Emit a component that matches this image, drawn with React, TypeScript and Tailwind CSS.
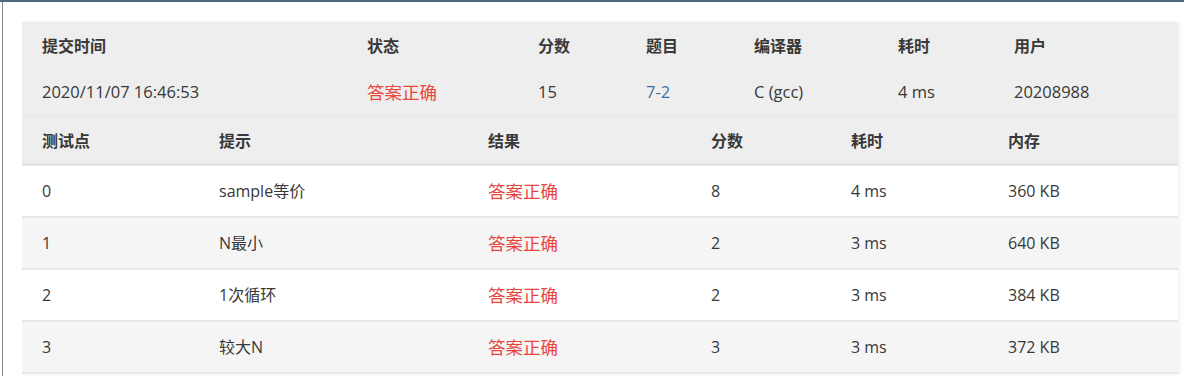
const font = { fontFamily: '"Open Sans", "Noto Sans CJK SC", sans-serif' };

const submitCols = "grid-cols-[325px_171px_108px_108px_144px_116px_184px]";
const caseCols = "grid-cols-[177px_269px_223px_140px_157px_190px]";

type CaseRow = { id: string; hint: string; score: string; time: string; mem: string };

const cases: CaseRow[] = [
  { id: "0", hint: "sample等价", score: "8", time: "4 ms", mem: "360 KB" },
  { id: "1", hint: "N最小", score: "2", time: "3 ms", mem: "640 KB" },
  { id: "2", hint: "1次循环", score: "2", time: "3 ms", mem: "384 KB" },
  { id: "3", hint: "较大N", score: "3", time: "3 ms", mem: "372 KB" },
];

function Status() {
  return <span className="text-[17.5px] text-[#e8453c]">答案正确</span>;
}

export default function App() {
  return (
    <div
      className="w-[1184px] h-[376px] overflow-hidden bg-white border-t-2 border-[#4a6983] text-[#383838]"
      style={font}
    >
      <div className="ml-[2px] h-full border-l border-[#8a8a8a] pl-[19px] pt-[20px] pr-[6px]">
        <div className="shadow-[2px_0_4px_rgba(0,0,0,0.06)]">
          {/* submission summary */}
          <div className={`grid ${submitCols} bg-[#eeeeee] h-[46px] items-center text-[16px] font-semibold`}>
            {["提交时间", "状态", "分数", "题目", "编译器", "耗时", "用户"].map((h) => (
              <div key={h} className="pl-5 pt-[1px]">
                {h}
              </div>
            ))}
          </div>
          <div className={`grid ${submitCols} bg-[#eeeeee] h-[48px] items-center text-[16.5px]`}>
            <div className="pl-5">2020/11/07 16:46:53</div>
            <div className="pl-5">
              <Status />
            </div>
            <div className="pl-5">15</div>
            <div className="pl-5 text-[#3b6ea5]">7-2</div>
            <div className="pl-5">C (gcc)</div>
            <div className="pl-5">4 ms</div>
            <div className="pl-5">20208988</div>
          </div>

          {/* test cases */}
          <div
            className={`grid ${caseCols} bg-[#eeeeee] h-[50px] items-center text-[16px] font-semibold border-t border-[#e6e6e6] border-b-[3px] border-b-[#e4e4e4]`}
          >
            {["测试点", "提示", "结果", "分数", "耗时", "内存"].map((h) => (
              <div key={h} className="pl-5 pt-[2px]">
                {h}
              </div>
            ))}
          </div>
          {cases.map((c, i) => (
            <div
              key={c.id}
              className={`grid ${caseCols} h-[52px] items-center text-[16px] border-b-2 border-[#e8e8e8] ${
                i % 2 === 1 ? "bg-[#f5f5f5]" : "bg-white"
              }`}
            >
              <div className="pl-5">{c.id}</div>
              <div className="pl-5">{c.hint}</div>
              <div className="pl-5">
                <Status />
              </div>
              <div className="pl-5">{c.score}</div>
              <div className="pl-5">{c.time}</div>
              <div className="pl-5">{c.mem}</div>
            </div>
          ))}
        </div>
      </div>
    </div>
  );
}
